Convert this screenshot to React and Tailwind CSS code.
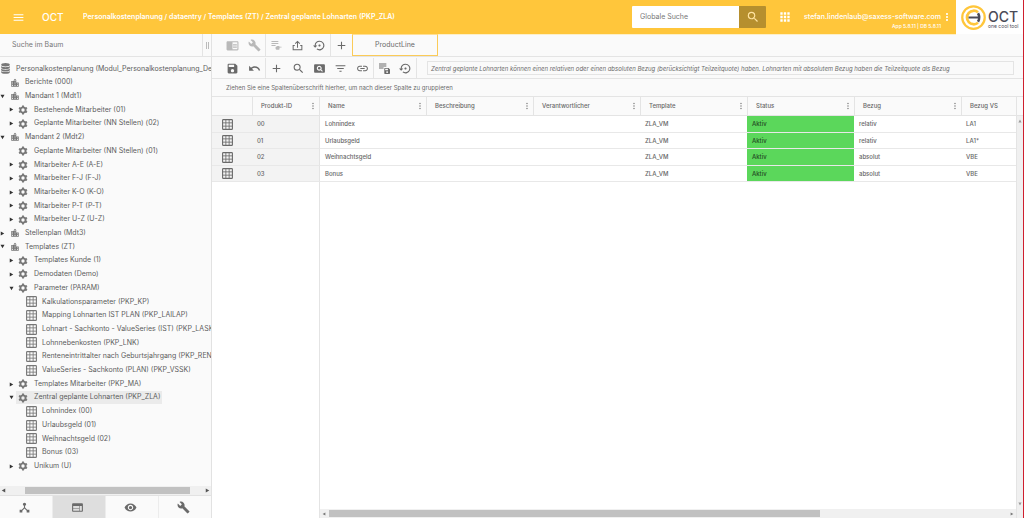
import React from 'react';
import {
  MdAdd, MdApps, MdBuild, MdChromeReaderMode, MdDeviceHub, MdFilterList, MdLink, MdLocationCity,
  MdMenu, MdMoreVert, MdPageview, MdSave, MdSearch, MdSettingsBackupRestore, MdUndo,
  MdVisibility, MdWeb,
} from 'react-icons/md';

function GridIcon({ className }) {
  return (
    <svg viewBox="0 0 22 22" className={className} fill="none" stroke="currentColor" aria-hidden="true">
      <rect x="1.2" y="1.2" width="19.6" height="19.6" rx="1.5" strokeWidth="2.2" />
      <path d="M7.7 1v20M14.3 1v20M1 7.7h20M1 14.3h20" strokeWidth="1.7" />
    </svg>
  );
}

function GearIcon({ className }) {
  return (
    <svg viewBox="0 0 24 24" className={className} fill="none" stroke="currentColor" aria-hidden="true">
      <circle cx="12" cy="12" r="6.300" strokeWidth="4.600" />
      <path d="M12 1v4M12 19v4M2.500 6.500l3.400 2M18.100 15.500l3.400 2M2.500 17.500l3.400-2M18.100 8.500l3.400-2" strokeWidth="4.600" />
    </svg>
  );
}

function DatabaseIcon({ className }) {
  return (
    <svg viewBox="0 0 18 22" className={className} fill="currentColor" aria-hidden="true">
      <ellipse cx="9" cy="3.6" rx="8.6" ry="3.4" />
      <path d="M.4 6.2c1 1.600 4.500 2.400 8.600 2.400s7.600-.8 8.600-2.400v2.800c0 1.900-3.900 3.200-8.600 3.200S.4 10.900.4 9z" />
      <path d="M.4 11c1 1.600 4.500 2.400 8.600 2.400s7.600-.8 8.600-2.400v2.800c0 1.900-3.900 3.200-8.600 3.200S.4 15.700.4 13.800z" />
      <path d="M.4 15.800c1 1.600 4.500 2.400 8.600 2.400s7.600-.8 8.600-2.400v2.600c0 1.900-3.900 3.200-8.600 3.200S.4 20.300.4 18.400z" />
    </svg>
  );
}

function UploadIcon({ className }) {
  return (
    <svg viewBox="0 0 24 24" className={className} fill="none" stroke="currentColor" strokeWidth="2.200" aria-hidden="true">
      <path d="M6 12H2.500v9.500h19V12H18" />
      <path d="M12 17V3.500M7 8l5-5 5 5" />
    </svg>
  );
}

function ListHandIcon({ className }) {
  return (
    <svg viewBox="0 0 24 24" className={className} fill="currentColor" aria-hidden="true">
      <path d="M1 2h15v2.200H1zM1 6.500h15v2.200H1zM1 11h9v2.200H1z" />
      <path d="M10 15.500l4-2.500h4l.5 1.500H23v2h-4l-1 4.500h-6l-2-1.500z" />
    </svg>
  );
}

function ListSaveIcon({ className }) {
  return (
    <svg viewBox="0 0 24 24" className={className} fill="currentColor" aria-hidden="true">
      <path d="M0 1h16v2.200H0zM0 5.500h16v2.200H0zM0 10h10v2.200H0z" />
      <path fillRule="evenodd" d="M13 11h8l3 3v8.500a1.500 1.500 0 0 1-1.500 1.500H13a1.500 1.500 0 0 1-1.500-1.500v-10A1.500 1.500 0 0 1 13 11zm.5 1.800v3h6v-3zm4.200 5a2.100 2.100 0 1 0 0 4.200 2.100 2.100 0 0 0 0-4.200z" />
    </svg>
  );
}

function LogoMark() {
  return (
    <svg viewBox="0 0 50 50" className="size-[25px] shrink-0" fill="none" aria-hidden="true">
      <circle cx="25" cy="25" r="22.500" stroke="#ffc63b" strokeWidth="4.500" />
      <path d="M34 14.500A13.500 13.500 0 1 0 34 35.500" stroke="#ffc63b" strokeWidth="5.500" />
      <path d="M15 25h21" stroke="#4b4b57" strokeWidth="4" />
      <path d="M34 16.500Q39 25 34 33.500" stroke="#4b4b57" strokeWidth="5" />
    </svg>
  );
}

const rotate = { right: '', down: 'rotate-90', left: 'rotate-180', up: '-rotate-90' };
function Arrow({ dir, className = 'size-[5px]' }) {
  return (
    <svg viewBox="0 0 10 10" className={`${className} ${rotate[dir]}`} fill="currentColor" aria-hidden="true">
      <path d="M1.500 1l7 4-7 4z" />
    </svg>
  );
}

const TREE = [
  [0, '', 'Personalkostenplanung (Modul_Personalkostenplanung_Demo)'],
  [1, '', 'Berichte (000)'],
  [1, 'down', 'Mandant 1 (Mdt1)'],
  [2, 'right', 'Bestehende Mitarbeiter (01)'],
  [2, 'right', 'Geplante Mitarbeiter (NN Stellen) (02)'],
  [1, 'down', 'Mandant 2 (Mdt2)'],
  [2, '', 'Geplante Mitarbeiter (NN Stellen) (01)'],
  [2, 'right', 'Mitarbeiter A-E (A-E)'],
  [2, 'right', 'Mitarbeiter F-J (F-J)'],
  [2, 'right', 'Mitarbeiter K-O (K-O)'],
  [2, 'right', 'Mitarbeiter P-T (P-T)'],
  [2, 'right', 'Mitarbeiter U-Z (U-Z)'],
  [1, 'right', 'Stellenplan (Mdt3)'],
  [1, 'down', 'Templates (ZT)'],
  [2, 'right', 'Templates Kunde (1)'],
  [2, 'right', 'Demodaten (Demo)'],
  [2, 'down', 'Parameter (PARAM)'],
  [3, '', 'Kalkulationsparameter (PKP_KP)'],
  [3, '', 'Mapping Lohnarten IST PLAN (PKP_LAILAP)'],
  [3, '', 'Lohnart - Sachkonto - ValueSeries (IST) (PKP_LASK)'],
  [3, '', 'Lohnnebenkosten (PKP_LNK)'],
  [3, '', 'Renteneintrittalter nach Geburtsjahrgang (PKP_RENT)'],
  [3, '', 'ValueSeries - Sachkonto (PLAN) (PKP_VSSK)'],
  [2, 'right', 'Templates Mitarbeiter (PKP_MA)'],
  [2, 'down', 'Zentral geplante Lohnarten (PKP_ZLA)'],
  [3, '', 'Lohnindex (00)'],
  [3, '', 'Urlaubsgeld (01)'],
  [3, '', 'Weihnachtsgeld (02)'],
  [3, '', 'Bonus (03)'],
  [2, 'right', 'Unikum (U)'],
];
const SELECTED = 24;

const rowIndent = ['pl-0', 'pl-0', 'pl-[9px]', 'pl-[17px]'];
const labelPad = ['pl-px gap-[6px]', 'pl-[3px] gap-[5px]', 'pl-[2px] gap-[6px]', 'pl-[2px] gap-[5px]'];
const icons = [
  <DatabaseIcon className="w-[9px] h-[11px] shrink-0" />,
  <MdLocationCity className="size-[10px] shrink-0" />,
  <GearIcon className="size-[10px] shrink-0" />,
  <GridIcon className="size-[11px] shrink-0" />,
];

function TreeRow({ level, arrow, label, selected }) {
  return (
    <li className={`flex flex-1 items-center ${rowIndent[level]}`}>
      {level > 0 && (
        <span className="flex w-[7px] shrink-0 text-[#333]">
          {arrow && (
            <button aria-label={arrow === 'down' ? 'Zuklappen' : 'Aufklappen'}>
              <Arrow dir={arrow} />
            </button>
          )}
        </span>
      )}
      <button className={`flex h-[13px] items-center whitespace-nowrap pr-[2px] text-[#777] ${labelPad[level]} ${selected ? 'bg-[#ebebeb]' : ''}`}>
        {icons[level]}
        <span className="text-[#5c5c5c]">{label}</span>
      </button>
    </li>
  );
}

function ToolGroup({ className, items }) {
  return (
    <div className={`flex shrink-0 border-r border-[#e4e4e4] ${className}`}>
      {items.map(([label, icon, dim]) => (
        <button key={label} aria-label={label} className={`flex flex-1 items-center justify-center ${dim ? 'text-[#b9b9b9]' : 'text-[#6a6a6a]'}`}>
          {icon}
        </button>
      ))}
    </div>
  );
}

const ic = 'size-[13px]';
const ics = 'size-[11px]';

const COLS = ['Produkt-ID', 'Name', 'Beschreibung', 'Verantwortlicher', 'Template', 'Status', 'Bezug', 'Bezug VS'];
const ROWS = [
  ['00', 'Lohnindex', '', '', 'ZLA_VM', 'Aktiv', 'relativ', 'LA1'],
  ['01', 'Urlaubsgeld', '', '', 'ZLA_VM', 'Aktiv', 'relativ', 'LA1*'],
  ['02', 'Weihnachtsgeld', '', '', 'ZLA_VM', 'Aktiv', 'absolut', 'VBE'],
  ['03', 'Bonus', '', '', 'ZLA_VM', 'Aktiv', 'absolut', 'VBE'],
];

function cellStyle(i) {
  if (i === 0) return 'bg-[#f3f3f3]';
  if (i === 1) return 'border-l border-l-[#e4e4e4] pl-[4px]';
  if (i === 5) return 'bg-[#5bd75b] text-[#234a23]';
  return '';
}

function Header() {
  return (
    <header className="flex h-[34px] shrink-0 items-center bg-[#ffc63b] text-white">
      <button aria-label="Menü" className="ml-[12px]"><MdMenu className="size-[13px]" /></button>
      <span className="ml-[17px] w-[41px] text-[10px] font-medium">OCT</span>
      <nav className="flex-1 truncate pt-px text-[7px] font-semibold">
        Personalkostenplanung / dataentry / Templates (ZT) / Zentral geplante Lohnarten (PKP_ZLA)
      </nav>
      <form className="flex h-[22px]" onSubmit={(e) => e.preventDefault()}>
        <input aria-label="Globale Suche" placeholder="Globale Suche" className="w-[107px] rounded-l-[1px] bg-white px-[8px] pt-px text-[7px] text-[#666] outline-none placeholder:text-[#777]" />
        <button aria-label="Suchen" className="flex w-[27px] items-center justify-center rounded-r-[1px] bg-[#b68f2e] text-[#ffe3a0]">
          <MdSearch className="size-[14px]" />
        </button>
      </form>
      <button aria-label="Apps" className="ml-[12px]"><MdApps className="size-[14px]" /></button>
      <div className="relative ml-[12px] text-[7px] font-medium">
        stefan.lindenlaub@saxess-software.com
        <span className="absolute right-0 top-full whitespace-nowrap text-[5px] leading-[9px]">App 5.8.11 | DB 5.8.11</span>
      </div>
      <button aria-label="Benutzermenü" className="mr-[3px]"><MdMoreVert className="size-[12px]" /></button>
      <div className="flex h-full w-[67px] items-center gap-[2px] bg-white pl-[5px] text-[#4b4b57]">
        <LogoMark />
        <div className="flex flex-col pt-[4px]">
          <span className="text-[14px] leading-[14px] font-medium">OCT</span>
          <span className="text-[5px] leading-[5px] whitespace-nowrap">one cool tool</span>
        </div>
      </div>
    </header>
  );
}

function Sidebar() {
  const tabs = [
    ['Struktur', <MdDeviceHub className="size-[13px]" />],
    ['Ansicht', <MdWeb className="size-[13px]" />],
    ['Vorschau', <MdVisibility className="size-[13px]" />],
    ['Werkzeuge', <MdBuild className="size-[13px]" />],
  ];
  return (
    <aside className="flex w-[212px] shrink-0 flex-col border-r border-[#e2e2e2] bg-[#fafafa]">
      <div className="flex h-[23px] shrink-0 border-b border-[#e4e4e4]">
        <input aria-label="Suche im Baum" placeholder="Suche im Baum" className="min-w-0 flex-1 bg-transparent pl-[12px] pt-px text-[7px] outline-none placeholder:text-[#777]" />
        <div className="flex w-[9px] items-center justify-center gap-px border-l border-[#e4e4e4]">
          <span className="h-[7px] w-px bg-[#bbb]" />
          <span className="h-[7px] w-px bg-[#bbb]" />
        </div>
      </div>
      <ul className="flex flex-1 flex-col overflow-hidden pt-[5px] pb-[13px] text-[7px]">
        {TREE.map(([level, arrow, label], i) => (
          <TreeRow key={i} level={level} arrow={arrow} label={label} selected={i === SELECTED} />
        ))}
      </ul>
      <div className="flex h-[9px] shrink-0 items-center justify-between bg-[#f0f0f0] px-px text-[#555]">
        <Arrow dir="left" />
        <div className="mr-[15px] ml-[19px] h-[7px] flex-1 bg-[#c1c1c1]" />
        <Arrow dir="right" />
      </div>
      <div className="flex h-[23px] shrink-0 border-t border-[#e2e2e2]">
        {tabs.map(([label, icon], i) => (
          <button key={label} aria-label={label} className={`flex flex-1 items-center justify-center border-r border-[#ececec] pr-[3px] text-[#6a6a6a] last:border-r-0 ${i === 1 ? 'bg-[#dedede]' : ''}`}>
            {icon}
          </button>
        ))}
      </div>
    </aside>
  );
}

function DataGrid() {
  return (
    <div className="flex flex-1 overflow-hidden">
      <div className="flex flex-1 flex-col overflow-hidden bg-white">
        <table className="w-full table-fixed border-separate border-spacing-0 text-left text-[6px] leading-[8px] font-medium text-[#666]">
          <colgroup>
            <col className="w-[40px]" />
            <col className="w-[67px]" />
            <col className="w-[107px]" />
            <col className="w-[107px]" />
            <col className="w-[107px]" />
            <col className="w-[107px]" />
            <col className="w-[107px]" />
            <col className="w-[107px]" />
            <col />
          </colgroup>
          <thead>
            <tr className="h-[19px] bg-[#fafafa]">
              <th aria-label="Tabelle" className="border-b border-[#e4e4e4] p-0" />
              {COLS.map((c, i) => (
                <th key={c} className="border-b border-l border-[#e4e4e4] p-0 pl-[8px] font-medium">
                  <div className="flex items-center justify-between">
                    {c}
                    {i < 7 && (
                      <button aria-label={`${c} Menü`} className="pr-px text-[#888]"><MdMoreVert className="size-[10px]" /></button>
                    )}
                  </div>
                </th>
              ))}
            </tr>
          </thead>
          <tbody>
            {ROWS.map((r) => (
              <tr key={r[0]} className="odd:h-[17px] even:h-[16px]">
                <td className="border-b border-[#e8e8e8] bg-[#f3f3f3] p-0 pl-[10px] text-[#6a6a6a]">
                  <GridIcon className="size-[11px]" />
                </td>
                {r.map((v, i) => (
                  <td key={i} className={`border-b border-[#e8e8e8] p-0 pl-[5px] ${cellStyle(i)}`}>{v}</td>
                ))}
              </tr>
            ))}
          </tbody>
        </table>
        <div className="flex flex-1">
          <div className="w-[108px] shrink-0 border-r border-[#e4e4e4]" />
          <div className="flex flex-1 flex-col justify-end">
            <div className="flex h-[9px] items-center bg-[#f0f0f0] px-[2px] text-[#777]">
              <Arrow dir="left" className="size-[4px]" />
              <div className="ml-[3px] h-[7px] w-[71%] bg-[#c1c1c1]" />
              <span className="flex-1" />
              <Arrow dir="right" className="size-[4px]" />
            </div>
          </div>
        </div>
      </div>
      <div className="flex w-[7px] shrink-0 flex-col border-l border-[#e4e4e4]">
        <div className="h-[19px] border-b border-[#e4e4e4]" />
        <div className="flex flex-1 flex-col items-center justify-between bg-[#f0f0f0] pt-[3px] pb-[12px] text-[#999]">
          <Arrow dir="up" className="size-[4px]" />
          <Arrow dir="down" className="size-[4px]" />
        </div>
      </div>
    </div>
  );
}

export default function App() {
  return (
    <div className="flex h-screen flex-col overflow-hidden border-r border-[#cf1f2e] bg-[#fafafa] font-['Inter','Roboto',sans-serif]">
      <Header />
      <div className="flex flex-1 overflow-hidden">
        <Sidebar />
        <main className="flex min-w-0 flex-1 flex-col text-[#6a6a6a]">
          <div className="flex h-[23px] shrink-0 border-b border-[#e4e4e4] pl-[10px]">
            <ToolGroup className="w-[44px]" items={[
              ['Bereich', <MdChromeReaderMode className={ic} />, true],
              ['Einstellungen', <MdBuild className={ic} />, true],
            ]} />
            <ToolGroup className="w-[65px]" items={[
              ['Auswahl', <ListHandIcon className={ics} />, true],
              ['Export', <UploadIcon className={ics} />],
              ['Wiederherstellen', <MdSettingsBackupRestore className={ic} />],
            ]} />
            <button aria-label="Neuer Tab" className="flex w-[21px] items-center justify-center"><MdAdd className={ic} /></button>
            <button className="w-[86px] border border-[#fbcb58] border-t-[#ffdf94] text-[7px]">ProductLine</button>
            <div className="mr-[67px] flex-1 border-t border-[#fdefc8]" />
          </div>
          <div className="flex h-[22px] shrink-0 border-b border-[#e4e4e4] pt-px pl-[10px]">
            <ToolGroup className="w-[44px]" items={[
              ['Speichern', <MdSave className={ic} />],
              ['Rückgängig', <MdUndo className={ic} />],
            ]} />
            <ToolGroup className="w-[108px]" items={[
              ['Hinzufügen', <MdAdd className={ic} />],
              ['Suchen', <MdSearch className={ic} />],
              ['Seitenansicht', <MdPageview className={ic} />],
              ['Filter', <MdFilterList className={ic} />],
              ['Verknüpfung', <MdLink className={ic} />],
            ]} />
            <ToolGroup className="w-[43px]" items={[
              ['Layout speichern', <ListSaveIcon className={ics} />],
              ['Layout zurücksetzen', <MdSettingsBackupRestore className={ic} />],
            ]} />
            <p className="my-[3px] mr-[9px] ml-[10px] min-w-0 flex-1 truncate border border-[#e4e4e4] pl-[3px] text-[6px] leading-[13px] italic">
              Zentral geplante Lohnarten können einen relativen oder einen absoluten Bezug (berücksichtigt Teilzeitquote) haben. Lohnarten mit absolutem Bezug haben die Teilzeitquote als Bezug
            </p>
          </div>
          <p className="h-[18px] shrink-0 border-b border-[#e4e4e4] pl-[14px] text-[6px] leading-[17px]">
            Ziehen Sie eine Spaltenüberschrift hierher, um nach dieser Spalte zu gruppieren
          </p>
          <DataGrid />
        </main>
      </div>
    </div>
  );
}
